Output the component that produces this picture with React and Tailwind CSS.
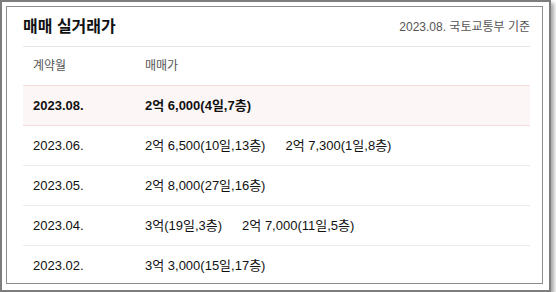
const rows = [
  { month: "2023.08.", deals: ["2억 6,000(4일,7층)"], active: true },
  { month: "2023.06.", deals: ["2억 6,500(10일,13층)", "2억 7,300(1일,8층)"] },
  { month: "2023.05.", deals: ["2억 8,000(27일,16층)"] },
  { month: "2023.04.", deals: ["3억(19일,3층)", "2억 7,000(11일,5층)"] },
  { month: "2023.02.", deals: ["3억 3,000(15일,17층)"] },
];

const font = { fontFamily: '"Liberation Sans", "Noto Sans CJK KR", sans-serif' };

export default function App() {
  return (
    <div className="h-[292px] w-[556px] bg-white" style={font}>
      <div className="flex h-[292px] w-[551px] border-2 border-[#7d7d7d] bg-white pb-[6px] pl-1 pr-[6px] pt-1 shadow-[3px_3px_4px_rgba(0,0,0,0.35)]">
        <div className="flex-1 overflow-hidden border border-[#8c8c8c] bg-white pl-4 pr-3">
          <div className="flex h-[40px] items-center justify-between border-b border-[#e6e6e6]">
            <h2 className="text-[16px] font-bold leading-none text-[#111]">매매 실거래가</h2>
            <span className="text-[12px] leading-none text-[#555]">2023.08. 국토교통부 기준</span>
          </div>

          <div className="flex h-[38px] items-center text-[12px] text-[#555]">
            <div className="w-[122px] pl-[10px]">계약월</div>
            <div>매매가</div>
          </div>

          {rows.map((r) => (
            <div
              key={r.month}
              className={
                r.active
                  ? "flex h-[41px] items-center border-y border-[#f3dcdc] bg-[#fdf6f6] text-[13px] font-bold text-[#111]"
                  : "flex h-[40px] items-center border-b border-[#ebebeb] text-[13px] text-[#111]"
              }
            >
              <div className="w-[122px] pl-[10px]">{r.month}</div>
              <div className="flex gap-[20px]">
                {r.deals.map((d) => (
                  <span key={d}>{d}</span>
                ))}
              </div>
            </div>
          ))}
        </div>
      </div>
    </div>
  );
}
